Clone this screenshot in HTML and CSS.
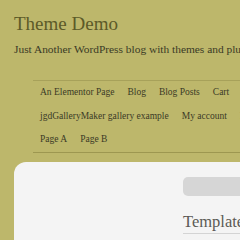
FILE: index.html
```html
<!DOCTYPE html>
<html lang="en">
<head>
    <meta charset="UTF-8">
    <meta name="viewport" content="width=device-width, initial-scale=1.0">
    <title>Theme Demo</title>
    <link rel="stylesheet" href="styles.css">
</head>
<body>
    <div id="page">
        <header id="masthead">
            <h1 class="site-title">Theme Demo</h1>
            <p class="site-desc">Just Another WordPress blog with themes and plugins</p>
        </header>

        <nav id="menu">
            <ul>
                <li>An Elementor Page</li>
                <li>Blog</li>
                <li>Blog Posts</li>
                <li>Cart</li>
                <li>Checkout</li>
                <li>Contact</li>
                <li>jgdGalleryMaker gallery example</li>
                <li>My account</li>
                <li>Refund Policy</li>
                <li>Sample Page</li>
                <li>Page A</li>
                <li>Page B</li>
            </ul>
        </nav>

        <main id="content">
            <div class="entry">
                <div class="search-bar"></div>
                <h2 class="entry-title">Template</h2>
            </div>
        </main>
    </div>
</body>
</html>
```

FILE: styles.css
```css
* {
    padding: 0;
    margin: 0;
    box-sizing: border-box;
}

html,
body {
    overflow: hidden;
}

body {
    background: #bdb76b;
    font-family: "Liberation Serif", "DejaVu Serif", serif;
    color: #3a3a26;
}

li {
    list-style: none;
}

#page {
    width: 480px;
}

#masthead {
    padding: 12px 0 0 14px;
    height: 80px;
}

.site-title {
    font-size: 19px;
    font-weight: normal;
    line-height: 24px;
    color: #5c5a28;
}

.site-desc {
    margin-top: 3px;
    font-size: 11.4px;
    line-height: 20px;
    white-space: nowrap;
}

#menu {
    margin-left: 33px;
    width: 340px;
    border-top: 1px solid #a7a15a;
    border-bottom: 1px solid #9d9750;
}

#menu ul {
    display: flex;
    flex-wrap: wrap;
    column-gap: 13px;
    padding-left: 7px;
}

#menu li {
    font-size: 9.5px;
    line-height: 23.7px;
    color: #3a3a26;
    white-space: nowrap;
}

#content {
    margin: 9px 0 0 14px;
    background: #f4f4f4;
    border-radius: 12px 0 0 0;
    padding: 15px 0 0 169px;
    height: 120px;
}

.search-bar {
    width: 200px;
    height: 19px;
    background: #d6d6d6;
    border-radius: 5px;
}

.entry-title {
    margin-top: 15px;
    font-size: 16.5px;
    font-weight: normal;
    line-height: 22px;
    color: #5b5a55;
    border-bottom: 1px solid #d4d4d4;
    width: 200px;
}
```
